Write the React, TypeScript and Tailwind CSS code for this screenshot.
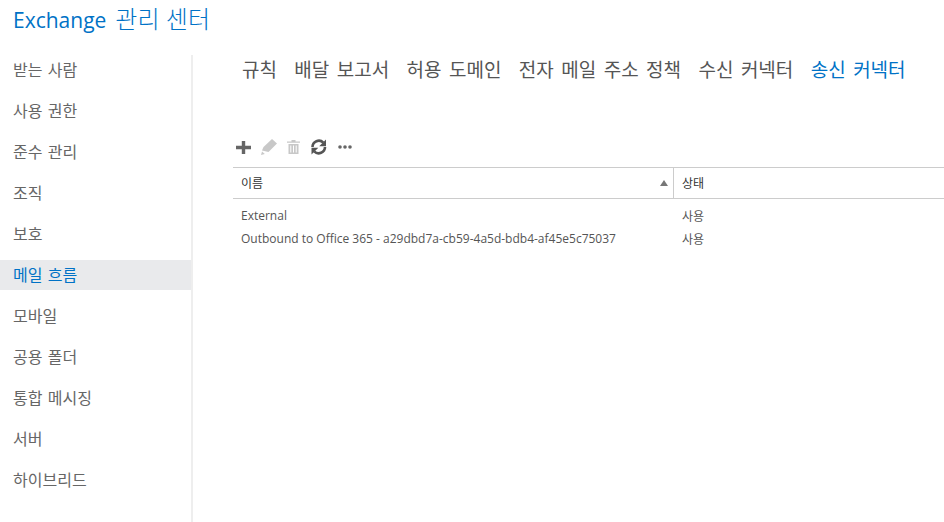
import React from "react";

const KO = { fontFamily: '"Noto Sans CJK KR", "Open Sans", sans-serif' };
const MIX = { fontFamily: '"Open Sans", "Noto Sans CJK KR", sans-serif' };

const side = ["받는 사람", "사용 권한", "준수 관리", "조직", "보호", "메일 흐름", "모바일", "공용 폴더", "통합 메시징", "서버", "하이브리드"];
const tabs = ["규칙", "배달 보고서", "허용 도메인", "전자 메일 주소 정책", "수신 커넥터", "송신 커넥터"];
const rows = [
  ["External", "사용"],
  ["Outbound to Office 365 - a29dbd7a-cb59-4a5d-bdb4-af45e5c75037", "사용"],
];

export default function App() {
  return (
    <div className="w-[944px] h-[522px] bg-white overflow-hidden flex flex-col" style={MIX}>
      <div className="h-[55px] shrink-0 pl-[13px] pt-[2px] leading-[32px] text-[#0072c6] whitespace-nowrap flex items-baseline">
        <span className="text-[21px]">Exchange</span>
        <span className="text-[24px] ml-[9px] font-light [word-spacing:1px]" style={KO}>관리 센터</span>
      </div>
      <div className="flex flex-1 min-h-0">
        <nav className="w-[193px] shrink-0 border-r-2 border-[#eeeeee] flex flex-col gap-[11px] text-[16px] text-[#666666] [word-spacing:1.8px]" style={KO}>
          {side.map((s) => (
            <div key={s} className={`h-[30px] pl-[13px] pb-[2px] flex items-center ${s === "메일 흐름" ? "bg-[#e9eaec] text-[#0072c6]" : ""}`}>{s}</div>
          ))}
        </nav>
        <main className="flex-1 min-w-0 flex flex-col pl-[40px]">
          <div className="flex gap-[17.4px] h-[28px] items-center pl-[9px] text-[19px] text-[#555555] whitespace-nowrap [word-spacing:3.2px]" style={KO}>
            {tabs.map((t, i) => (
              <span key={t} className={i === 5 ? "text-[#0072c6]" : ""}>{t}</span>
            ))}
          </div>
          <div className="mt-[52px] h-[32px] flex items-start">
            <svg width="125" height="24" viewBox="0 0 125 24" className="block">
              <path d="M8.800 6h3.400v4.800H18v3.400h-5.800V19H8.800v-4.800H3v-3.400h5.800z" fill="#666666" />
              <path d="M29 15.500l1.500-3.500 8.500-8 5 4.500-8.500 8.500z" fill="#c8c8c8" />
              <path d="M28 20l1-3.500 2.800 2.500z" fill="#c8c8c8" />
              <path d="M58.500 6.500V5h4v1.500H67v1.300H54V6.500zM55.500 9H65.500v10H55.500z" fill="#c8c8c8" />
              <path d="M57.800 10.500v7M60.500 10.500v7M63.200 10.500v7" stroke="#fff" strokeWidth="1" />
              <path d="M79.500 12a6.300 6.300 0 0 1 10.800-4.400" fill="none" stroke="#555555" strokeWidth="2.600" />
              <path d="M93 4.500v6.800h-6.800z" fill="#555555" />
              <path d="M92 12a6.300 6.300 0 0 1-10.800 4.400" fill="none" stroke="#555555" strokeWidth="2.600" />
              <path d="M78.500 19.500v-6.800h6.800z" fill="#555555" />
              <circle cx="107" cy="12" r="1.800" fill="#666666" />
              <circle cx="112" cy="12" r="1.800" fill="#666666" />
              <circle cx="117" cy="12" r="1.800" fill="#666666" />
            </svg>
          </div>
          <div className="flex h-[32px] border-y border-[#cccccc] text-[12px] text-[#333333] leading-none" style={KO}>
            <div className="w-[441px] pl-[8px] pr-[5px] flex items-center justify-between border-r border-[#cccccc]">
              <span>이름</span>
              <svg width="8" height="6" viewBox="0 0 8 6"><path d="M4 0l4 6H0z" fill="#777777" /></svg>
            </div>
            <div className="pl-[8px] flex items-center">상태</div>
          </div>
          <div className="pt-[5px] text-[12px] text-[#555555]">
            {rows.map(([a, b]) => (
              <div key={a} className="flex h-[23px] items-center">
                <div className="w-[441px] pl-[8px] whitespace-nowrap">{a}</div>
                <div className="pl-[8px]" style={KO}>{b}</div>
              </div>
            ))}
          </div>
        </main>
      </div>
    </div>
  );
}
